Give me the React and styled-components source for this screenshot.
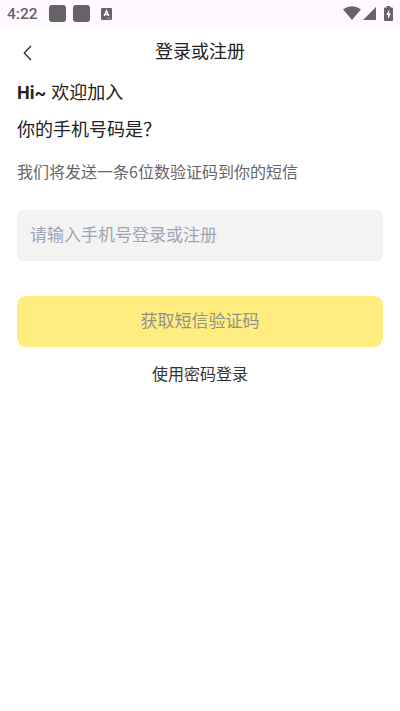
import styled, { createGlobalStyle } from 'styled-components';

const palette = {
    status: '#fef9fe',
    statusIcon: '#666367',
    text: '#222222',
    sub: '#666666',
    placeholder: '#9fa5b5',
    input: '#f3f3f3',
    yellow: '#ffed80',
    disabled: '#929189',
};

const GlobalStyle = createGlobalStyle`
    * {
        box-sizing: border-box;
    }
    body {
        margin: 0;
        background: white;
        font-family: 'Noto Sans CJK SC', sans-serif;
        color: ${palette.text};
    }
`;

const Screen = styled.div`
    min-height: 711px;
    background: white;
`;

const StatusBlock = styled.div`
    height: 27px;
    padding: 0 7px;
    display: flex;
    align-items: center;
    justify-content: space-between;
    background: ${palette.status};
    color: ${palette.statusIcon};

    svg {
        display: block;
    }
    .left,
    .right {
        display: flex;
        align-items: center;
    }
    .right {
        padding-bottom: 1px;
    }
    .time {
        width: 42px;
        font-family: Roboto, sans-serif;
        font-size: 15.5px;
        font-weight: 500;
        line-height: 27px;
        padding-top: 1px;
    }
    .app {
        margin-left: 4px;
    }
    .signal {
        margin: 0 8px 0 2px;
    }
`;

const Notice = styled.span`
    width: 17px;
    height: 17px;
    margin-right: 7px;
    border-radius: 3px;
    background: ${palette.statusIcon};
`;

const HeaderBlock = styled.header`
    height: 47px;
    padding: 0 17px;
    display: grid;
    grid-template-columns: 20px 1fr 20px;
    align-items: center;
`;

const BackButton = styled.button`
    display: flex;
    justify-content: center;
    padding: 4px 0 0;
    border: none;
    background: none;
    color: ${palette.text};
`;

const Title = styled.h1`
    margin: 0;
    padding-bottom: 1px;
    font-size: 18px;
    font-weight: 400;
    line-height: 46px;
    text-align: center;
`;

const Content = styled.main`
    padding: 0 17px;
    display: flex;
    flex-direction: column;
`;

const Greeting = styled.p`
    margin: 0;
    padding-bottom: 2px;
    font-size: 18px;
    line-height: 35px;

    b {
        margin-right: 1px;
        font-family: Roboto, sans-serif;
        line-height: 1;
    }
`;

const Guide = styled.p`
    margin: 5px 0 20px;
    font-size: 16px;
    line-height: 37px;
    color: ${palette.sub};
`;

const PhoneInput = styled.input`
    width: 100%;
    height: 51px;
    padding: 0 13px 4px;
    border: none;
    border-radius: 6px;
    outline: none;
    background: ${palette.input};
    font-family: inherit;
    font-size: 17px;

    &::placeholder {
        color: ${palette.placeholder};
        opacity: 1;
    }
`;

const SubmitButton = styled.button`
    width: 100%;
    height: 51px;
    margin-top: 35px;
    padding: 0 0 4px;
    border: none;
    border-radius: 9px;
    background: ${palette.yellow};
    font-family: inherit;
    font-size: 17px;
    color: ${palette.disabled};
`;

const PasswordLink = styled.a`
    align-self: center;
    margin-top: 14px;
    font-size: 16px;
    line-height: 24px;
    color: #333333;
`;

const AppBadgeIcon = () => (
    <svg width="11" height="12" viewBox="0 0 11 12">
        <rect width="11" height="12" rx="1.3" fill="currentColor" />
        <path d="M3.2 8 L5.5 2.8 L7.8 8 M4 6.5 H7" fill="none" stroke="white" strokeWidth="1.4" />
        <path d="M5.8 10.2 H9.3" stroke="#c8c5c9" strokeWidth="0.7" />
    </svg>
);

const WifiIcon = () => (
    <svg width="18" height="14" viewBox="0 0 18 14">
        <path d="M0 3.3 Q9 -3 18 3.3 L9 14 Z" fill="currentColor" />
    </svg>
);

const SignalIcon = () => (
    <svg className="signal" width="13" height="13" viewBox="0 0 13 13">
        <path d="M13 0 V13 H0 Z" fill="currentColor" />
    </svg>
);

const BatteryIcon = () => (
    <svg width="9" height="15" viewBox="0 0 9 15">
        <path
            d="M2.7 0 H6.3 V1.5 H8 Q9 1.5 9 2.5 V14 Q9 15 8 15 H1 Q0 15 0 14 V2.5 Q0 1.5 1 1.5 H2.7 Z"
            fill="currentColor"
        />
        <path d="M5.2 3.7 L2.2 9 H4 V13 L6.9 7.6 H5.2 Z" fill="white" />
    </svg>
);

const StatusBar = () => (
    <StatusBlock>
        <div className="left">
            <span className="time">4:22</span>
            <Notice />
            <Notice />
            <span className="app">
                <AppBadgeIcon />
            </span>
        </div>
        <div className="right">
            <WifiIcon />
            <SignalIcon />
            <BatteryIcon />
        </div>
    </StatusBlock>
);

const Header = () => (
    <HeaderBlock>
        <BackButton aria-label="返回">
            <svg width="9" height="16" viewBox="0 0 9 16">
                <path d="M8 1 L1.2 8 L8 15" fill="none" stroke="currentColor" strokeWidth="1.2" />
            </svg>
        </BackButton>
        <Title>登录或注册</Title>
    </HeaderBlock>
);

const App = () => {
    return (
        <>
            <GlobalStyle />
            <Screen lang="zh-CN">
                <StatusBar />
                <Header />
                <Content>
                    <Greeting>
                        <b>Hi~</b> 欢迎加入
                    </Greeting>
                    <Greeting>你的手机号码是？</Greeting>
                    <Guide>我们将发送一条6位数验证码到你的短信</Guide>
                    <PhoneInput type="tel" placeholder="请输入手机号登录或注册" />
                    <SubmitButton disabled>获取短信验证码</SubmitButton>
                    <PasswordLink>使用密码登录</PasswordLink>
                </Content>
            </Screen>
        </>
    );
};

export default App;
